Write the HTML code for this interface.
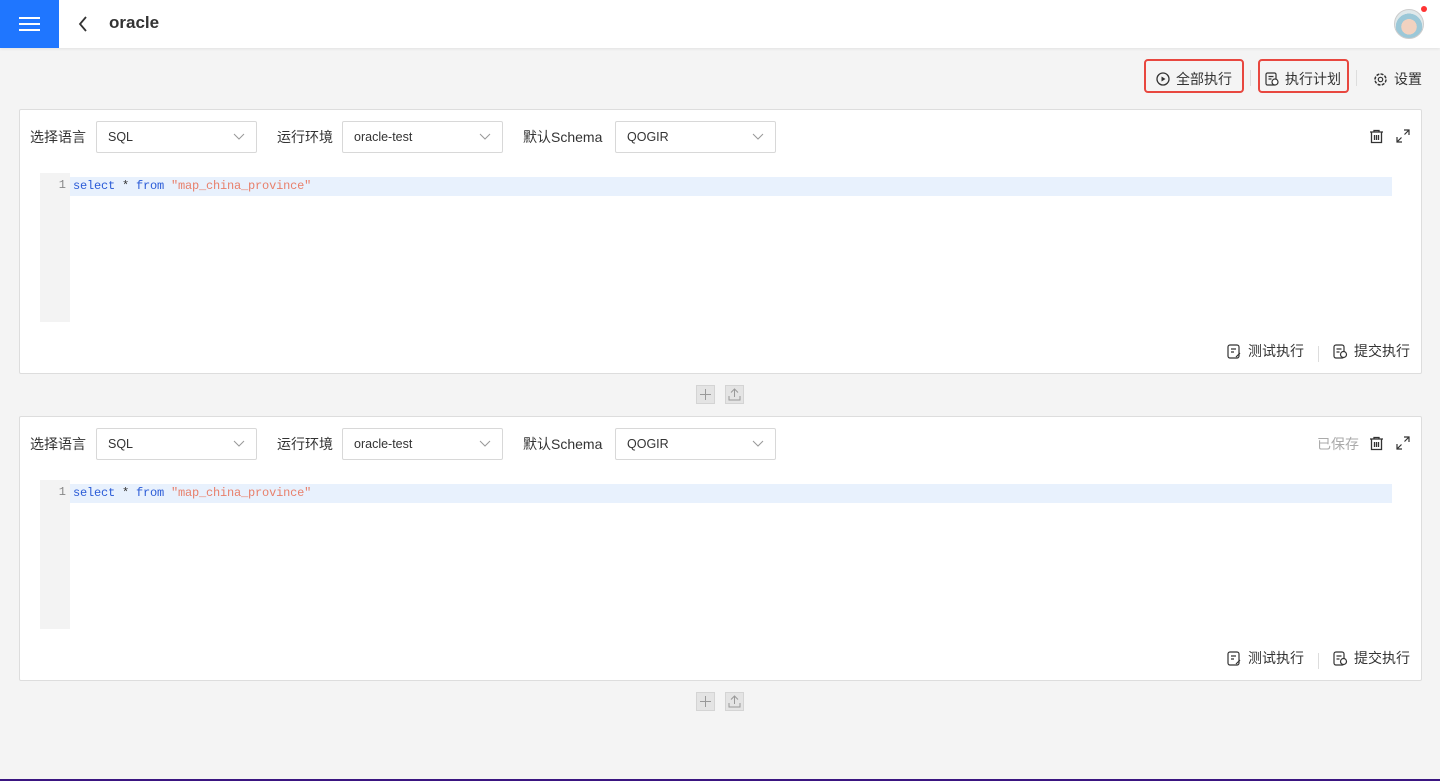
<!DOCTYPE html>
<html><head><meta charset="utf-8"><style>
*{box-sizing:border-box;margin:0;padding:0}
body{width:1440px;height:781px;background:#f4f4f4;font-family:"Liberation Sans","Noto Sans CJK SC",sans-serif;position:relative;overflow:hidden;color:#333}
.top{position:absolute;left:0;top:0;width:1440px;height:48px;background:#fff;box-shadow:0 1px 3px rgba(0,0,0,.08)}
.menu{position:absolute;left:0;top:0;width:59px;height:48px;background:#1f76ff}
.menu i{position:absolute;left:19px;width:21px;height:2px;background:#fff}
.title{position:absolute;left:109px;top:13px;font-size:17px;font-weight:bold;color:#333}
.ab{position:absolute;font-size:14px;color:#333;display:flex;align-items:center;gap:6px}
.red{position:absolute;border:2px solid #e8473f;border-radius:4px}
.sep{position:absolute;width:1px;height:16px;background:#ddd}
.panel{position:absolute;left:19px;width:1403px;height:265px;background:#fff;border:1px solid #ddd;border-radius:2px}
.lbl{position:absolute;top:17px;font-size:14px;color:#333}
.sel{position:absolute;top:11px;width:161px;height:32px;border:1px solid #d8d8d8;border-radius:2px;font-size:12.5px;padding:8px 0 0 11px;color:#333}
.sel svg{position:absolute;right:11px;top:11px}
.gut{position:absolute;left:20px;top:63px;width:30px;height:149px;background:#f3f3f3;font-family:"Liberation Mono",monospace;font-size:12px;color:#888;text-align:right;padding:5px 4px 0 0}
.line{position:absolute;left:50px;top:67px;width:1322px;height:19px;background:#e8f1fd;font-family:"Liberation Mono",monospace;font-size:12px;padding:2px 0 0 3px;color:#2a5bd7;letter-spacing:-0.2px}
.line span{color:#e8806c}
.ft{position:absolute;bottom:12px;font-size:14px;color:#333;display:flex;align-items:center;gap:6px}
.btns{position:absolute;left:696px;display:flex;gap:10px}
.btns div{width:19px;height:19px;background:#e4e4e4;border:1px solid #d4d4d4;display:flex;align-items:center;justify-content:center}
</style></head><body>
<div class="top">
 <div class="menu"><i style="top:17px"></i><i style="top:23px"></i><i style="top:29px"></i></div>
 <svg style="position:absolute;left:78px;top:16px" width="10" height="16"><path d="M8 1 L2 8 L8 15" stroke="#333" stroke-width="1.8" fill="none"/></svg>
 <div class="title">oracle</div>
 <div style="position:absolute;left:1394px;top:9px;width:30px;height:30px;border-radius:50%;background:radial-gradient(circle at 50% 60%,#f2d2c0 0 35%,#9cc8d8 36% 60%,#dfe8ea 61%);border:1px solid #ccc"></div>
 <div style="position:absolute;left:1421px;top:6px;width:6px;height:6px;border-radius:50%;background:#f33"></div>
</div>
<div class="red" style="left:1144px;top:59px;width:100px;height:34px"></div>
<div class="red" style="left:1258px;top:59px;width:91px;height:34px"></div>
<div class="ab" style="left:1156px;top:69px"><svg width="14" height="14"><circle cx="7" cy="7" r="6" stroke="#333" stroke-width="1.3" fill="none"/><path d="M5.5 4.5 L9.5 7 L5.5 9.5Z" fill="#333"/></svg>全部执行</div>
<div class="sep" style="left:1250px;top:70px"></div>
<div class="ab" style="left:1265px;top:69px"><svg width="14" height="14"><rect x="1" y="1" width="10" height="12" rx="1.5" stroke="#333" stroke-width="1.2" fill="none"/><path d="M3.5 4.5h5M3.5 7h3" stroke="#333" stroke-width="1.2"/><circle cx="10" cy="10" r="3" fill="#fff" stroke="#333" stroke-width="1.2"/></svg>执行计划</div>
<div class="sep" style="left:1356px;top:70px"></div>
<div class="ab" style="left:1373px;top:69px"><svg width="15" height="15"><circle cx="7.5" cy="7.5" r="5.5" stroke="#333" stroke-width="1.5" fill="none" stroke-dasharray="3 1.3"/><circle cx="7.5" cy="7.5" r="2.2" stroke="#333" stroke-width="1.2" fill="none"/></svg>设置</div>

<div class="panel" style="top:109px">
 <div class="lbl" style="left:10px">选择语言</div>
 <div class="sel" style="left:76px">SQL<svg width="12" height="8"><path d="M1 1l5 5 5-5" stroke="#999" fill="none"/></svg></div>
 <div class="lbl" style="left:257px">运行环境</div>
 <div class="sel" style="left:322px">oracle-test<svg width="12" height="8"><path d="M1 1l5 5 5-5" stroke="#999" fill="none"/></svg></div>
 <div class="lbl" style="left:503px">默认Schema</div>
 <div class="sel" style="left:595px">QOGIR<svg width="12" height="8"><path d="M1 1l5 5 5-5" stroke="#999" fill="none"/></svg></div>
 <svg style="position:absolute;left:1349px;top:19px" width="15" height="15"><path d="M1 3h13M5 3V1.5h5V3M2.5 3.5v10h10v-10M5.5 6v5M7.5 6v5M9.5 6v5" stroke="#333" stroke-width="1.3" fill="none"/></svg>
 <svg style="position:absolute;left:1376px;top:19px" width="14" height="14"><path d="M8 1h5v5M13 1L8.5 5.5M6 13H1V8M1 13l4.5-4.5" stroke="#333" stroke-width="1.2" fill="none"/></svg>
 <div class="gut">1</div>
 <div class="line">select <b style="font-weight:normal;color:#333">*</b> from <span>"map_china_province"</span></div>
 <div class="ft" style="left:1207px"><svg width="15" height="15"><rect x="1" y="1" width="11" height="13" rx="2" stroke="#333" stroke-width="1.2" fill="none"/><path d="M4 5h5M4 8h3M9 13l4-4" stroke="#333" stroke-width="1.2"/></svg>测试执行</div>
 <div class="sep" style="left:1298px;top:236px"></div>
 <div class="ft" style="left:1313px"><svg width="15" height="15"><rect x="1" y="1" width="10" height="13" rx="2" stroke="#333" stroke-width="1.2" fill="none"/><path d="M3.5 5h5M3.5 8h3" stroke="#333" stroke-width="1.2"/><circle cx="10.5" cy="10.5" r="3" fill="#fff" stroke="#333" stroke-width="1.2"/></svg>提交执行</div>
</div>
<div class="btns" style="top:385px"><div><svg width="11" height="11"><path d="M5.5 0v11M0 5.5h11" stroke="#999"/></svg></div><div><svg width="13" height="13"><path d="M6.5 1v8M3 4.5l3.5-3.5 3.5 3.5M1 8v4h11V8" stroke="#999" fill="none"/></svg></div></div>

<div class="panel" style="top:416px">
 <div class="lbl" style="left:10px">选择语言</div>
 <div class="sel" style="left:76px">SQL<svg width="12" height="8"><path d="M1 1l5 5 5-5" stroke="#999" fill="none"/></svg></div>
 <div class="lbl" style="left:257px">运行环境</div>
 <div class="sel" style="left:322px">oracle-test<svg width="12" height="8"><path d="M1 1l5 5 5-5" stroke="#999" fill="none"/></svg></div>
 <div class="lbl" style="left:503px">默认Schema</div>
 <div class="sel" style="left:595px">QOGIR<svg width="12" height="8"><path d="M1 1l5 5 5-5" stroke="#999" fill="none"/></svg></div>
 <div class="lbl" style="left:1297px;color:#aaa">已保存</div>
 <svg style="position:absolute;left:1349px;top:19px" width="15" height="15"><path d="M1 3h13M5 3V1.5h5V3M2.5 3.5v10h10v-10M5.5 6v5M7.5 6v5M9.5 6v5" stroke="#333" stroke-width="1.3" fill="none"/></svg>
 <svg style="position:absolute;left:1376px;top:19px" width="14" height="14"><path d="M8 1h5v5M13 1L8.5 5.5M6 13H1V8M1 13l4.5-4.5" stroke="#333" stroke-width="1.2" fill="none"/></svg>
 <div class="gut">1</div>
 <div class="line">select <b style="font-weight:normal;color:#333">*</b> from <span>"map_china_province"</span></div>
 <div class="ft" style="left:1207px"><svg width="15" height="15"><rect x="1" y="1" width="11" height="13" rx="2" stroke="#333" stroke-width="1.2" fill="none"/><path d="M4 5h5M4 8h3M9 13l4-4" stroke="#333" stroke-width="1.2"/></svg>测试执行</div>
 <div class="sep" style="left:1298px;top:236px"></div>
 <div class="ft" style="left:1313px"><svg width="15" height="15"><rect x="1" y="1" width="10" height="13" rx="2" stroke="#333" stroke-width="1.2" fill="none"/><path d="M3.5 5h5M3.5 8h3" stroke="#333" stroke-width="1.2"/><circle cx="10.5" cy="10.5" r="3" fill="#fff" stroke="#333" stroke-width="1.2"/></svg>提交执行</div>
</div>
<div class="btns" style="top:692px"><div><svg width="11" height="11"><path d="M5.5 0v11M0 5.5h11" stroke="#999"/></svg></div><div><svg width="13" height="13"><path d="M6.5 1v8M3 4.5l3.5-3.5 3.5 3.5M1 8v4h11V8" stroke="#999" fill="none"/></svg></div></div>
<div style="position:absolute;left:0;top:779px;width:1440px;height:2px;background:#3a1580"></div>
</body></html>
